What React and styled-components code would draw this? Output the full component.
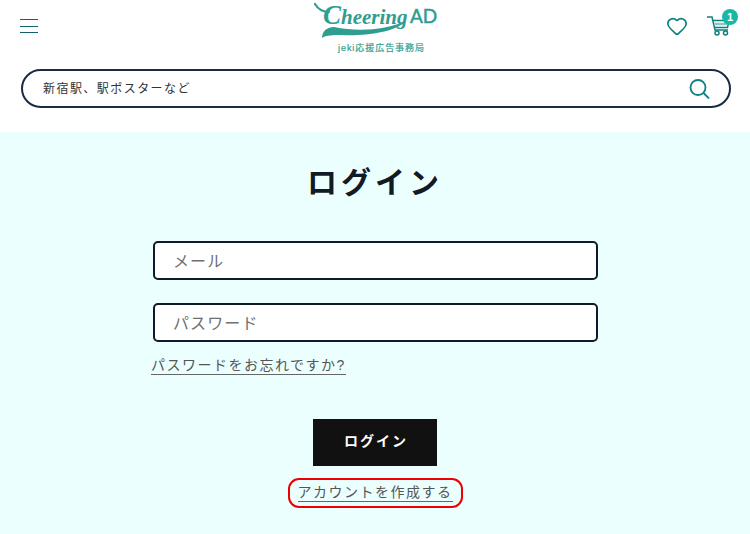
import styled, { createGlobalStyle } from "styled-components";
import { Heart } from "lucide-react";

const GlobalStyle = createGlobalStyle`
  html, body {
    margin: 0;
    padding: 0;
    background: #fff;
  }
  body {
    font-family: "Liberation Sans", "Noto Sans CJK JP", sans-serif;
    overflow: hidden;
  }
  * {
    box-sizing: border-box;
  }
`;

const Logo = () => (
  <LogoBox>
    <svg width="126" height="44" viewBox="0 0 126 44">
      <path d="M1 4 C4 9 9 12 15 12" fill="none" stroke="#2f9d90" strokeWidth="2.2" strokeLinecap="round" />
      <text x="9" y="24" fontFamily="Liberation Serif, serif" fontStyle="italic" fontWeight="700" fontSize="21" fill="#2f9d90">
        <tspan fontSize="27">C</tspan>heering
      </text>
      <text x="96" y="23" fontFamily="Lato, sans-serif" fontSize="19" fill="#2f9d90" stroke="#2f9d90" strokeWidth="0.5">
        AD
      </text>
      <path d="M8 38 C8 32 12 27 20 27 C44 32 72 30 92 21 C80 33 50 36 28 35 C19 35 12 35 8 38 Z" fill="#2f9d90" />
    </svg>
    <LogoCaption>jeki応援広告事務局</LogoCaption>
  </LogoBox>
);

const CartIcon = () => (
  <svg width="24" height="20" viewBox="0 0 24 20" fill="none" stroke="#0f8080" strokeWidth="1.5">
    <path d="M0 1 H5 L8 14 H21" />
    <path d="M6 4.500 H22 L20.500 11.500 H7.500" />
    <path d="M7 8 H21" strokeWidth="2.500" stroke="#8cc7c7" />
    <circle cx="10" cy="17" r="2" />
    <circle cx="18.500" cy="17" r="2" />
  </svg>
);

const SearchIcon = () => (
  <svg width="22" height="20" viewBox="0 0 22 20" fill="none" stroke="#0f8080" strokeWidth="1.8">
    <circle cx="9" cy="8.500" r="7.500" />
    <path d="M14.500 14 L20 19.500" />
  </svg>
);

export default function App() {
  return (
    <>
      <GlobalStyle />
      <Header>
        <TopRow>
          <MenuButton aria-label="menu">
            <span />
            <span />
            <span />
          </MenuButton>
          <Logo />
          <IconGroup>
            <Heart size={22} color="#0f8080" strokeWidth={1.8} />
            <CartWrap>
              <CartIcon />
              <Badge>1</Badge>
            </CartWrap>
          </IconGroup>
        </TopRow>
        <SearchBar>
          <SearchText>新宿駅、駅ポスターなど</SearchText>
          <SearchIcon />
        </SearchBar>
      </Header>
      <Main>
        <Title>ログイン</Title>
        <Form>
          <Field>メール</Field>
          <Field>パスワード</Field>
          <ForgotRow>
            <TextLink>パスワードをお忘れですか?</TextLink>
          </ForgotRow>
        </Form>
        <SubmitButton>ログイン</SubmitButton>
        <CreateBox>
          <TextLink>アカウントを作成する</TextLink>
        </CreateBox>
      </Main>
    </>
  );
}

const Header = styled.header`
  height: 132px;
  background: #fff;
  padding: 0 19px 0 21px;
`;

const TopRow = styled.div`
  height: 69px;
  display: flex;
  align-items: flex-start;
`;

const MenuButton = styled.div`
  width: 18px;
  margin: 19px 0 0 -1px;
  display: flex;
  flex-direction: column;
  gap: 5.500px;

  span {
    display: block;
    height: 1px;
    background: #14606a;
  }
`;

const LogoBox = styled.div`
  width: 126px;
  height: 56px;
  margin: 0 0 0 276px;
  position: relative;
`;

const LogoCaption = styled.div`
  position: absolute;
  left: 24px;
  top: 43px;
  font-size: 9px;
  line-height: 11px;
  letter-spacing: 0.950px;
  color: #2f9d90;
  -webkit-text-stroke: 0.2px #2f9d90;
  white-space: nowrap;
`;

const IconGroup = styled.div`
  margin-left: auto;
  margin-top: 15px;
  display: flex;
  align-items: flex-start;
  gap: 19px;
`;

const CartWrap = styled.div`
  position: relative;
  width: 24px;
  height: 20px;
  margin-top: 1px;
`;

const Badge = styled.span`
  position: absolute;
  right: -7px;
  top: -7px;
  width: 16px;
  height: 16px;
  border-radius: 50%;
  background: #17b8a6;
  color: #fff;
  font-size: 11px;
  font-weight: 700;
  line-height: 16px;
  text-align: center;
`;

const SearchBar = styled.div`
  height: 39px;
  width: 710px;
  border: 2px solid #1b2b41;
  border-radius: 20px;
  padding: 0 18px 0 20px;
  display: flex;
  align-items: center;
  justify-content: space-between;
`;

const SearchText = styled.span`
  font-size: 12px;
  line-height: 14px;
  letter-spacing: 1.450px;
  color: #333;
`;

const Main = styled.main`
  height: 402px;
  background: #ebfffe;
  display: flex;
  flex-direction: column;
  align-items: center;
`;

const Title = styled.h1`
  margin: 30px 0 0;
  height: 42px;
  font-size: 30px;
  line-height: 42px;
  font-weight: 700;
  letter-spacing: 4px;
  color: #121a26;
`;

const Form = styled.div`
  width: 445px;
  margin: 37px 0 0 1px;
  display: flex;
  flex-direction: column;
  gap: 23px;
`;

const Field = styled.div`
  height: 39px;
  background: #fff;
  border: 2px solid #111a2b;
  border-radius: 5px;
  padding: 0 18px 2px 18px;
  display: flex;
  align-items: center;
  font-size: 16px;
  letter-spacing: 1.100px;
  color: #6f6f6f;
`;

const ForgotRow = styled.div`
  margin: -9px 0 0 -2px;
  height: 20px;
`;

const TextLink = styled.span`
  display: inline-block;
  font-size: 14px;
  line-height: 17px;
  letter-spacing: 1.500px;
  color: #555;
  border-bottom: 1.500px solid #666;
`;

const SubmitButton = styled.div`
  width: 124px;
  height: 47px;
  margin-top: 43px;
  padding: 0 0 5px 2px;
  background: #111;
  color: #fff;
  font-size: 14px;
  font-weight: 700;
  letter-spacing: 2px;
  display: flex;
  align-items: center;
  justify-content: center;
`;

const CreateBox = styled.div`
  margin-top: 12px;
  width: 175px;
  height: 30px;
  border: 2px solid #ee0000;
  border-radius: 11px;
  display: flex;
  align-items: center;
  justify-content: center;
`;
